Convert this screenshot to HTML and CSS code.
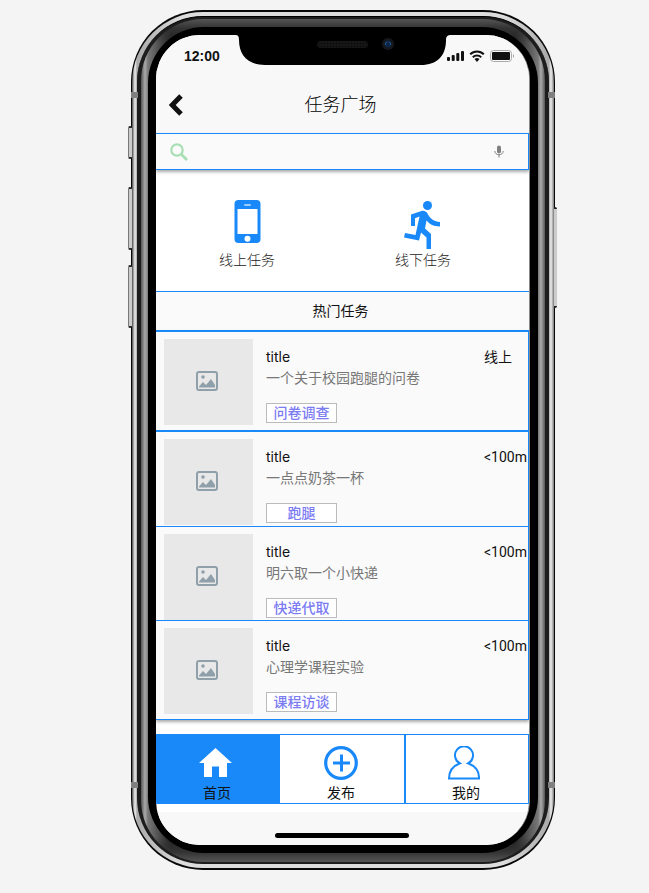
FILE: index.html
```html
<!DOCTYPE html>
<html lang="zh-CN">
<head>
<meta charset="utf-8">
<meta name="viewport" content="width=device-width, initial-scale=1">
<title>任务广场</title>
<link rel="stylesheet" href="styles.css">
</head>
<body>
<svg class="defs" aria-hidden="true">
  <symbol id="picture" viewBox="0 0 22 20">
    <rect x="1" y="1" width="20" height="18" rx="2" fill="none" stroke="#8fa0aa" stroke-width="2"/>
    <circle cx="7" cy="6" r="1.8" fill="#8fa0aa"/>
    <path d="M3 16.500V15.500L7 11l3 3 5-6 4 6v2.500z" fill="#8fa0aa"/>
  </symbol>
</svg>
<div class="phone">
  <i class="key key-mute"></i><i class="key key-up"></i><i class="key key-down"></i><i class="key key-power"></i>
  <i class="band band-tl"></i><i class="band band-tr"></i><i class="band band-bl"></i><i class="band band-br"></i>
  <div class="rim"><div class="groove"><div class="metal"><div class="bezel">
    <main class="screen">
      <svg class="notch" viewBox="0 0 216 31" aria-hidden="true">
        <defs><pattern id="grille" width="3" height="3" patternUnits="userSpaceOnUse"><rect width="3" height="3" fill="#101010"/><circle cx="1" cy="1" r="1" fill="#1a1a1a"/></pattern></defs>
        <path d="M0 0H216C213 0 211 1 211 5C211 21 202 30 186 30H30C14 30 4 21 4 5C4 1 3 0 0 0Z"/>
        <rect x="82" y="6" width="51" height="7" rx="3.500" fill="url(#grille)"/>
        <circle cx="153" cy="9" r="6" fill="#15171a"/><circle cx="153" cy="9" r="3.500" fill="#0c2547"/><path d="M150.500 10a2.500 2.500 0 0 1 2-3.300M154 7a2.500 2.500 0 0 1 1.500 3" stroke="#28598f" fill="none"/>
      </svg>
      <header class="top">
        <div class="status">
          <span class="time">12:00</span>
          <svg class="signals" viewBox="0 0 68 12" aria-hidden="true">
            <g fill="#111"><rect y="7" width="3" height="4" rx="1"/><rect x="4.700" y="5" width="3" height="6" rx="1"/><rect x="9.300" y="3" width="3" height="8" rx="1"/><rect x="14" y="1" width="3" height="10" rx="1"/></g>
            <g fill="none" stroke="#111" stroke-width="2"><path d="M23.200 4.300a9.500 9.500 0 0 1 13.600 0"/><path d="M25.800 7.200a6 6 0 0 1 8.400 0"/></g>
            <path d="M30 12l-2.500-3a3.800 3.800 0 0 1 5 0z" fill="#111"/>
            <rect x="43.500" y=".5" width="21" height="11" rx="3" fill="none" stroke="#aaa"/><rect x="45" y="2" width="18" height="8" rx="1" fill="#111"/><path d="M66 4q2 2 0 4z" fill="#999"/>
          </svg>
        </div>
        <div class="nav">
          <button class="back" aria-label="返回"><svg viewBox="0 0 14 22"><path d="M12 2L3.200 11L12 20" fill="none" stroke="#111" stroke-width="5"/></svg></button>
          <h1>任务广场</h1>
        </div>
      </header>
      <form class="search">
        <label for="q" aria-label="搜索"><svg viewBox="0 0 18 18"><circle cx="7" cy="7" r="5.700" fill="none" stroke="#a9dfb4" stroke-width="2.200"/><path d="M11 11l6 6" stroke="#a9dfb4" stroke-width="2.800"/></svg></label>
        <input id="q" type="text">
        <button type="button" aria-label="语音"><svg viewBox="0 0 10 12"><rect x="3" width="4" height="8" rx="2" fill="#808080"/><path d="M.8 5.500c0 5 8.400 5 8.400 0M5 9v3" fill="none" stroke="#808080"/></svg></button>
      </form>
      <nav class="kinds">
        <a href="#"><svg viewBox="0 0 40 50"><rect x="7.500" y="0" width="26" height="43" rx="4" fill="#1989fa"/><path d="M10.500 9h20v25h-20z" fill="#fff"/><rect x="17" y="4" width="7" height="2" rx="1" fill="#9dccff"/><circle cx="20.500" cy="38.700" r="3" fill="#fff"/></svg><span>线上任务</span></a>
        <a href="#"><svg viewBox="0 0 40 50"><circle cx="24.500" cy="5.500" r="4.500" fill="#1989fa"/><path d="M8 14.500L18.500 11C21 10.500 23.500 11.500 24.500 13.500C27 18 30 21.500 37 22V26.500C30 26.500 26 23.500 23.500 20.500L22 28.500L28 34V49H23.500V37.500L18 32.500L16 40.500L1 37.500L2 33L12.500 35L16.500 16.500L12 18.300V26H8Z" fill="#1989fa"/></svg><span>线下任务</span></a>
      </nav>
      <h2>热门任务</h2>
      <ul class="tasks">
        <li class="roomy thick"><div class="thumb"><svg><use href="#picture"/></svg></div><div class="info"><h3>title</h3><p>一个关于校园跑腿的问卷</p><span class="tag">问卷调查</span></div><span class="where">线上</span></li>
        <li class="snug"><div class="thumb"><svg><use href="#picture"/></svg></div><div class="info"><h3>title</h3><p>一点点奶茶一杯</p><span class="tag">跑腿</span></div><span class="where">&lt;100m</span></li>
        <li><div class="thumb"><svg><use href="#picture"/></svg></div><div class="info"><h3>title</h3><p>明六取一个小快递</p><span class="tag">快递代取</span></div><span class="where">&lt;100m</span></li>
        <li class="roomy"><div class="thumb"><svg><use href="#picture"/></svg></div><div class="info"><h3>title</h3><p>心理学课程实验</p><span class="tag">课程访谈</span></div><span class="where">&lt;100m</span></li>
      </ul>
      <nav class="tabs">
        <a class="on" href="#"><svg viewBox="0 0 36 34"><path d="M16.500 2L33 17H28V31H20V20.500H13V31H5V17H0Z" fill="#fff"/></svg><span>首页</span></a>
        <a href="#"><svg viewBox="0 0 36 34"><circle cx="18" cy="17" r="15.300" fill="none" stroke="#1989fa" stroke-width="3.200"/><path d="M10 17h17M18.500 8.500v17" stroke="#1989fa" stroke-width="3"/></svg><span>发布</span></a>
        <a href="#"><svg viewBox="0 0 36 34"><path d="M1 32.500C1 25 5 20 12 17.300A9 9 0 1 1 20 17.300C27 20 31.500 25 31 32.500Z" fill="none" stroke="#1989fa" stroke-width="2"/></svg><span>我的</span></a>
      </nav>
      <div class="foot"><i></i></div>
    </main>
  </div></div></div></div>
</div>
</body>
</html>
```

FILE: styles.css
```css
* { box-sizing: border-box; }
body {
  margin: 0;
  padding: 10px 94px 22px 131px;
  background: #f4f4f4;
  color: #111;
  font: 14px/20px Inter, "Noto Sans CJK SC", sans-serif;
}
h1, h2, h3, p, ul { margin: 0; padding: 0; font-weight: 400; font-size: 14px; }
a { color: inherit; text-decoration: none; }
button { padding: 0; border: 0; background: none; }
svg { display: block; }
.defs { position: absolute; width: 0; height: 0; }

/* Device shell, from the outer edge inwards */
.phone {
  position: relative;
  max-width: 424px;
  padding: 2px 1px;
  border-radius: 72px;
  background: #080808;
}
.rim {
  position: relative;
  padding: 4px 5px;
  border-radius: 71px;
  background: linear-gradient(90deg, #444, #888 1px, #eee 3px, #aaa 5px, #ddd 50px, #ddd calc(100% - 50px), #aaa calc(100% - 5px), #eee calc(100% - 3px), #777);
}
.groove {
  padding: 2px 4px;
  border-radius: 66px;
  background: #1d1d1d;
  border-top: 1px solid #000;
}
.metal {
  padding: 8px 7px 9px;
  border-radius: 62px;
  background:
    linear-gradient(#555, #333 9px, transparent 24px, transparent calc(100% - 24px), #333 calc(100% - 10px), #555),
    linear-gradient(90deg, #555, #aaa 4px, #777 7px, #222 30px, #222 calc(100% - 30px), #777 calc(100% - 7px), #aaa calc(100% - 4px), #555);
}
.bezel { padding: 8px; border-radius: 56px; background: #000; }
.screen {
  position: relative;
  overflow: hidden;
  border-right: 1px solid #888;
  border-radius: 44px;
  background: #fff;
}
.key {
  position: absolute;
  left: -3px;
  width: 4px;
  border: 1px solid #777;
  border-width: 2px 0 2px 1px;
  border-top-color: #222;
  border-bottom-color: #222;
  border-radius: 2px;
  background: #ccc;
}
.key-mute { top: 116px; height: 33px; }
.key-up { top: 177px; height: 63px; }
.key-down { top: 255px; height: 63px; }
.key-power { left: auto; right: -2px; top: 197px; height: 101px; }
.band { position: absolute; z-index: 1; width: 7px; height: 6px; background: #808080; }
.band-tl { top: 82px; left: 0; }
.band-tr { top: 82px; right: 0; }
.band-bl { bottom: 82px; left: 0; }
.band-br { bottom: 82px; right: 0; }

.notch { position: absolute; top: 0; left: 50%; width: 216px; height: 31px; margin-left: -108px; }
.top { background: #f8f8f8; }
.status {
  display: flex;
  align-items: center;
  justify-content: space-between;
  height: 42px;
  padding: 0 14px 0 28px;
}
.time { font: bold 14px/20px "Liberation Sans", sans-serif; }
.signals { width: 68px; height: 12px; }
.nav {
  display: grid;
  grid-template-columns: 40px 1fr 44px;
  align-items: center;
  height: 56px;
}
.back { padding-left: 13px; }
.back svg { width: 14px; height: 22px; }
h1 { color: #000; font-size: 18px; font-weight: 300; text-align: center; }

.search {
  display: flex;
  align-items: center;
  height: 37px;
  padding: 0 24px 0 14px;
  border: 1px solid #1989fa;
  border-left: 0;
  background: #fafafa;
  box-shadow: 0 2px 3px #aaa;
}
.search label svg { width: 18px; height: 18px; }
.search input { flex: 1; min-width: 0; border: 0; background: none; outline: 0; font: inherit; }
.search button svg { width: 10px; height: 13px; }

.kinds {
  display: grid;
  grid-template-columns: 1fr 1fr;
  padding: 30px 18px 21px 3px;
  color: #222;
  font-weight: 300;
}
.kinds a { display: flex; flex-direction: column; align-items: center; }
.kinds svg { width: 40px; height: 50px; }

h2 {
  padding: 9px 4px 9px 0;
  border-top: 1px solid #1989fa;
  background: #fafafa;
  text-align: center;
}
.tasks {
  border-top: 2px solid #1989fa;
  border-right: 1px solid #1989fa;
  background: #fafafa;
  box-shadow: 0 2px 3px #aaa;
  list-style: none;
}
.tasks li {
  display: flex;
  gap: 13px;
  padding: 7px 0 0 8px;
  border-bottom: 1px solid #1989fa;
}
.tasks .roomy { padding-bottom: 5px; }
.tasks .snug { padding-bottom: 1px; }
.tasks .thick { border-bottom-width: 2px; }
.thumb {
  display: grid;
  place-items: center;
  width: 89px;
  height: 86px;
  padding: 0 4px 2px 0;
  background: #e8e8e8;
}
.thumb svg { width: 22px; height: 20px; }
.info { flex: 1; padding-top: 8px; }
.info p { color: #777; line-height: 22px; }
.tag {
  display: block;
  width: 71px;
  margin-top: 14px;
  border: 1px solid #bbb;
  background: #fff;
  color: #7b7bf2;
  font-weight: 500;
  line-height: 18px;
  text-align: center;
}
.where { width: 44px; padding-top: 8px; font-family: Roboto, "Noto Sans CJK SC", sans-serif; white-space: nowrap; }

.tabs {
  display: grid;
  grid-template-columns: 1fr 1fr 1fr;
  margin: 14px 0 8px;
  border: 1px solid #1989fa;
  border-left: 0;
}
.tabs a {
  display: flex;
  flex-direction: column;
  align-items: center;
  padding: 11px 2px 0 0;
}
.tabs a + a + a { border-left: 2px solid #1989fa; }
.tabs .on { background: #1989fa; }
.tabs svg { width: 36px; height: 34px; }
.tabs span { padding-top: 2px; line-height: 21px; }
.foot { display: flex; justify-content: center; padding: 21px 2px 7px 0; background: #f8f8f8; }
.foot i { width: 134px; height: 5px; border-radius: 3px; background: #000; }
```
